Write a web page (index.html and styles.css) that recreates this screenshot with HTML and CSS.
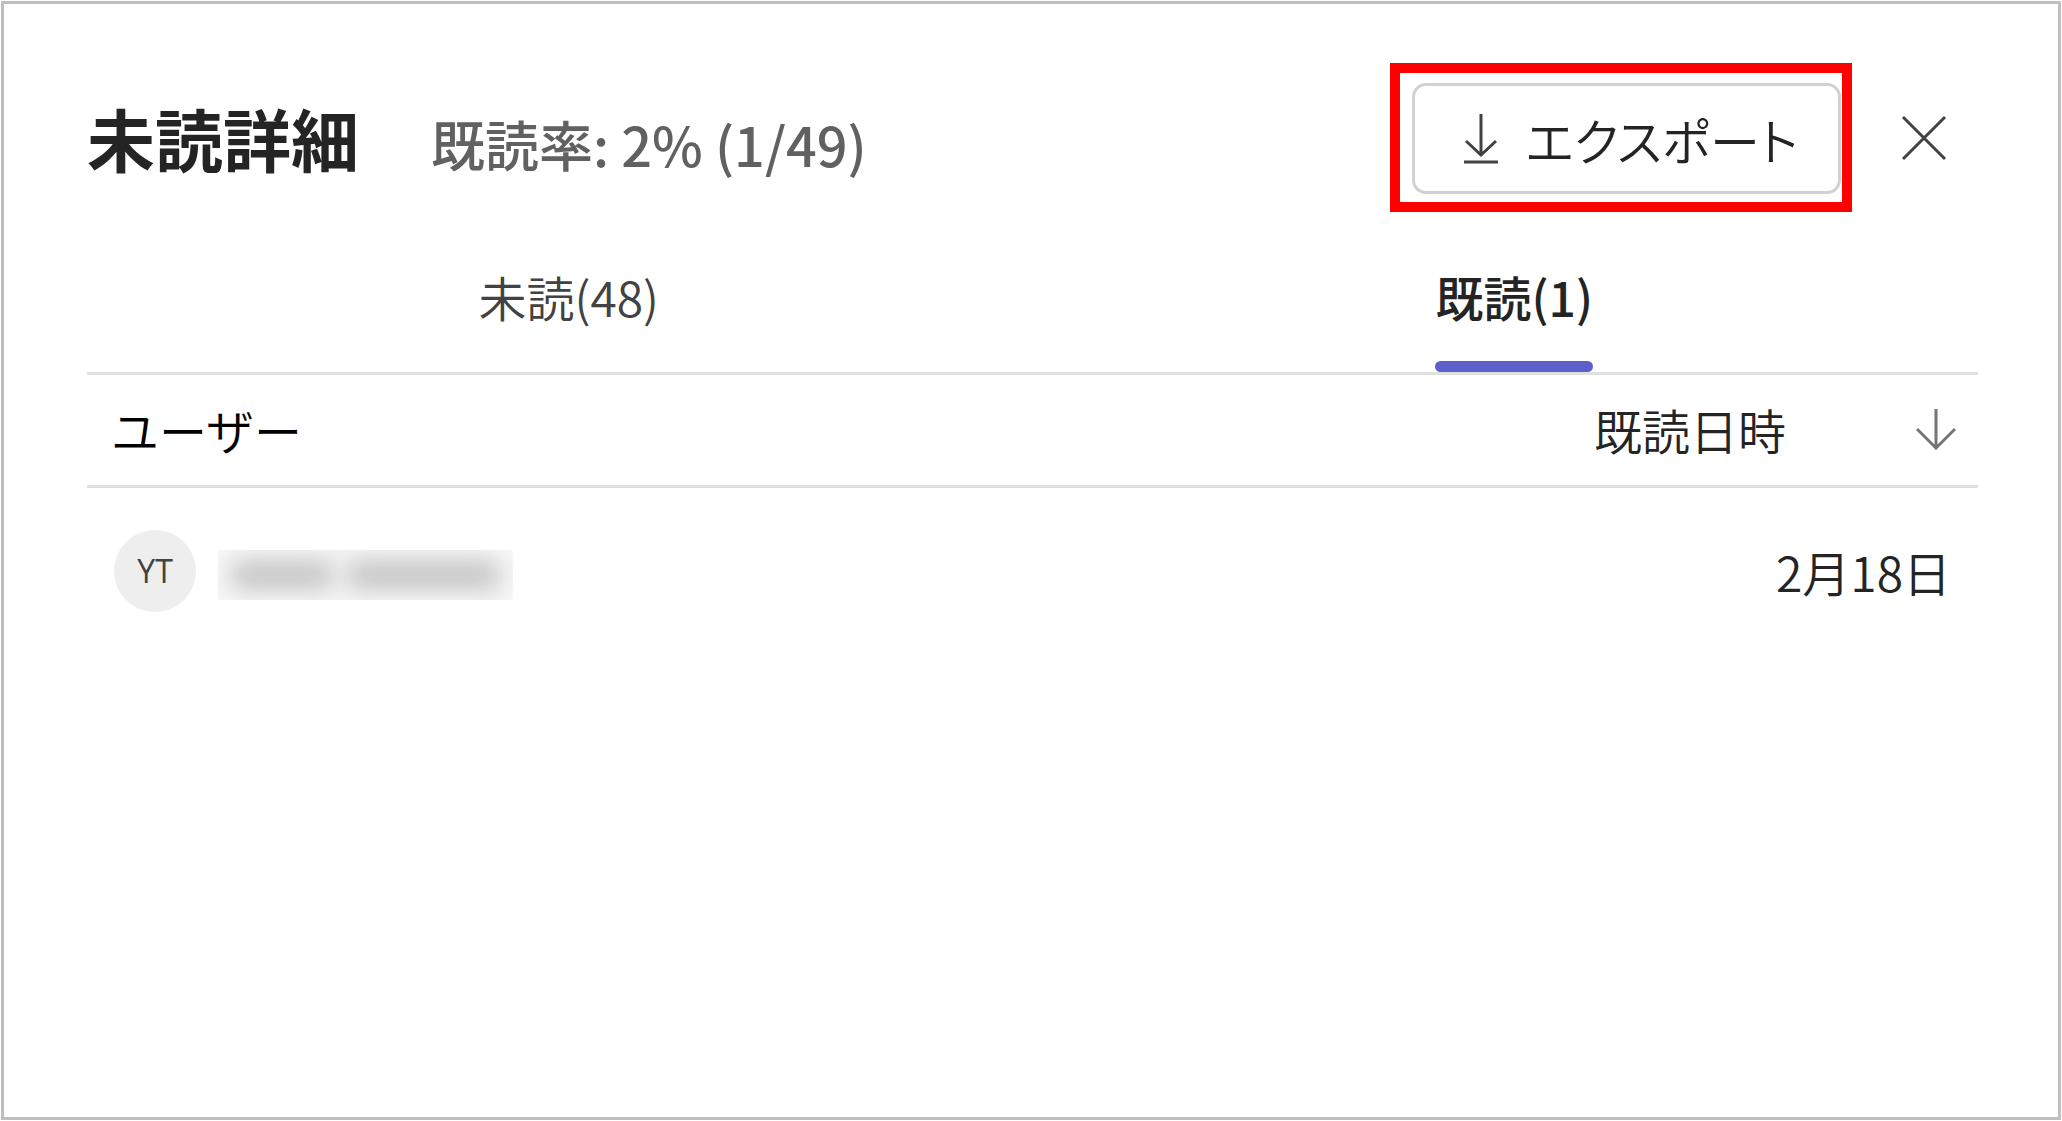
FILE: index.html
```
<!DOCTYPE html>
<html lang="ja">
<head>
    <meta charset="UTF-8">
    <title>未読詳細</title>
    <link rel="stylesheet" href="styles.css">
</head>
<body>
<section class="dialog">
    <header class="header">
        <div class="heading">
            <h1 class="title">未読詳細</h1>
            <p class="rate">既読率: 2% (1/49)</p>
        </div>
        <div class="mark">
            <button type="button" class="export">
                <svg class="exportIcon" width="36" height="52" viewBox="0 0 36 52" aria-hidden="true">
                    <path d="M18 1V42M3 28L18 42L33 28M1 49H35"/>
                </svg>
                <span>エクスポート</span>
            </button>
        </div>
        <button type="button" class="close" aria-label="閉じる">
            <svg width="48" height="48" viewBox="0 0 48 48" aria-hidden="true">
                <path d="M3 3L45 45M45 3L3 45"/>
            </svg>
        </button>
    </header>
    <nav class="tabs">
        <button type="button" class="tab"><span>未読(48)</span></button>
        <button type="button" class="tab active"><span>既読(1)</span></button>
    </nav>
    <table class="list">
        <thead>
        <tr>
            <th class="user">ユーザー</th>
            <th class="date">
                <button type="button" class="sort">
                    <span>既読日時</span>
                    <svg width="40" height="42" viewBox="0 0 40 42" aria-hidden="true">
                        <path d="M20 1V40M1 21L20 40L39 21"/>
                    </svg>
                </button>
            </th>
        </tr>
        </thead>
        <tbody>
        <tr>
            <td>
                <div class="person">
                    <span class="avatar">YT</span>
                    <span class="name"><i class="first"></i><i class="last"></i></span>
                </div>
            </td>
            <td class="date">2月18日</td>
        </tr>
        </tbody>
    </table>
</section>
</body>
</html>
```
FILE: styles.css
```
* {
    box-sizing: border-box;
}
body {
    margin: 0;
    background: #fff;
    color: #242424;
    font: 350 48px/64px "Noto Sans CJK JP", sans-serif;
}
button {
    padding: 0;
    border: 0;
    background: none;
    color: inherit;
    font: inherit;
    cursor: pointer;
}
svg {
    display: block;
    fill: none;
    stroke: #424242;
    stroke-width: 3;
}
.dialog {
    min-height: calc(100vh - 2px);
    margin: 1px;
    padding: 59px 80px 0 83px;
    border: 3px solid #bfbfbf;
}
.header {
    display: flex;
    align-items: center;
}
.heading {
    display: flex;
    align-items: baseline;
}
.title {
    margin: 0;
    font-size: 68px;
    line-height: 80px;
    font-weight: bold;
}
.rate {
    margin: 0 0 0 72px;
    color: #616161;
    font-size: 54px;
    font-weight: 500;
}
.mark {
    margin-left: auto;
    padding: 10px 1px 8px 12px;
    border: 10px solid #f00;
}
.export {
    display: flex;
    align-items: center;
    height: 111px;
    padding: 0 40px 0 48px;
    border: 3px solid #d1d1d1;
    border-radius: 14px;
    font-size: 50px;
    font-feature-settings: "palt";
}
.exportIcon {
    margin-right: 27px;
}
.close {
    margin: 0 30px 0 48px;
}
.tabs {
    display: grid;
    grid-template-columns: 1fr 1fr;
    justify-items: center;
    border-bottom: 3px solid #e0e0e0;
}
.tab {
    margin-left: 18px;
    padding-top: 52px;
    color: #424242;
}
.tab:after {
    content: '';
    display: block;
    height: 11px;
    margin-top: 33px;
    border-radius: 6px;
}
.active {
    color: #242424;
    font-weight: 500;
}
.active:after {
    background: #5b5fc7;
}
.list {
    width: 100%;
    border-spacing: 0;
}
.list th {
    height: 113px;
    padding: 0 22px 2px 24px;
    border-bottom: 3px solid #e0e0e0;
    font-weight: 350;
    text-align: left;
}
.list .user {
    color: #000;
}
.list td {
    height: 166px;
    padding: 0 27px;
}
.list .date {
    text-align: right;
}
.sort {
    display: inline-flex;
    align-items: center;
    gap: 130px;
}
.sort svg {
    stroke: #757575;
}
.person {
    display: flex;
    align-items: center;
    gap: 22px;
}
.avatar {
    width: 82px;
    height: 82px;
    border-radius: 50%;
    background: #eee;
    color: #424242;
    font: 32px/82px "Open Sans", sans-serif;
    text-align: center;
}
/* hidden user name */
.name {
    display: flex;
    align-items: center;
    gap: 12px;
    width: 295px;
    height: 50px;
    margin-top: 8px;
    padding: 0 12px;
    overflow: hidden;
    background: #f8f8f8;
}
.name i {
    height: 30px;
    border-radius: 12px;
    background: #c4c4c4;
    filter: blur(12px);
}
.first {
    flex: 2;
}
.last {
    flex: 3;
}
```
